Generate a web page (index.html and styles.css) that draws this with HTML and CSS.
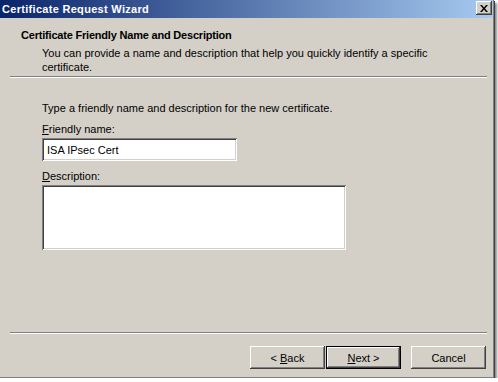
FILE: index.html
```html
<!DOCTYPE html>
<html lang="en">
<head>
  <meta charset="UTF-8" />
  <title>Certificate Request Wizard</title>
  <link rel="stylesheet" href="styles.css">
</head>
<body>

  <div class="window">

    <div class="titlebar">
      <span class="title">Certificate Request Wizard</span>
      <button class="close" aria-label="Close">
        <svg width="8" height="7" viewBox="0 0 8 7">
          <path d="M0 0h2l2 2.5L6 0h2L5 3.5 8 7H6L4 4.5 2 7H0l3-3.5z" fill="#000"/>
        </svg>
      </button>
    </div>

    <div class="header">
      <h1>Certificate Friendly Name and Description</h1>
      <p>You can provide a name and description that help you quickly identify a specific certificate.</p>
    </div>
    <div class="sep"></div>

    <div class="content">
      <p class="intro">Type a friendly name and description for the new certificate.</p>
      <label class="label" for="fname"><u>F</u>riendly name:</label>
      <input class="field" id="fname" type="text" value="ISA IPsec Cert">
      <label class="label desc-label" for="desc"><u>D</u>escription:</label>
      <textarea class="area" id="desc"></textarea>
    </div>

    <div class="footer">
      <div class="sep bottom"></div>
      <div class="buttons">
        <button class="btn">&lt; <u>B</u>ack</button>
        <button class="btn default"><u>N</u>ext &gt;</button>
        <button class="btn cancel">Cancel</button>
      </div>
    </div>

  </div>

</body>
</html>
```

FILE: styles.css
```css
    body {
      margin: 0;
      background: #ffffff;
      font-family: 'Liberation Sans', Arial, sans-serif;
      font-size: 11px;
      color: #000;
    }

    .window {
      width: 493px;
      height: 377px;
      background: #d4d0c8;
      display: flex;
      flex-direction: column;
      border-right: 1px solid #808080;
      border-bottom: 1px solid #808080;
      box-shadow: 1px 1px 0 #404040, 3px 3px 2px rgba(0,0,0,0.45);
    }

    .titlebar {
      height: 18px;
      display: flex;
      align-items: center;
      justify-content: space-between;
      padding: 0 1px 0 2px;
      background: linear-gradient(to right, #0a246a, #a6caf0);
    }

    .title {
      color: #fff;
      font-weight: bold;
      font-size: 11px;
      line-height: 18px;
      letter-spacing: 0.3px;
    }

    .close {
      width: 16px;
      height: 14px;
      padding: 0;
      margin-top: -2px;
      background: #d4d0c8;
      border: none;
      box-shadow: inset -1px -1px 0 #404040, inset 1px 1px 0 #fff, inset -2px -2px 0 #808080;
      display: flex;
      align-items: center;
      justify-content: center;
    }

    .header {
      padding: 10px 0 0 21px;
    }

    .header h1 {
      margin: 0 0 4px;
      font-size: 11px;
      font-weight: bold;
      line-height: 14px;
      letter-spacing: -0.2px;
    }

    .header p {
      margin: 0 0 0 21px;
      width: 420px;
      line-height: 14px;
    }

    .sep {
      margin: 2px 6px 0 10px;
      border-top: 1px solid #808080;
      border-bottom: 1px solid #fff;
    }

    .content {
      padding: 23px 0 0 42px;
      display: flex;
      flex-direction: column;
      align-items: flex-start;
    }

    .intro {
      margin: 0 0 7px;
      line-height: 14px;
    }

    .label {
      line-height: 14px;
      margin-bottom: 2px;
    }

    .desc-label {
      margin-top: 8px;
    }

    .field, .area {
      box-sizing: border-box;
      margin: 0;
      border: none;
      background: #fff;
      font-family: inherit;
      font-size: 11px;
      box-shadow: inset 1px 1px 0 #808080, inset -1px -1px 0 #fff, inset 2px 2px 0 #404040, inset -2px -2px 0 #d4d0c8;
      outline: none;
      resize: none;
    }

    .field {
      width: 195px;
      height: 23px;
      padding: 0 4px 0 5px;
    }

    .area {
      width: 304px;
      height: 65px;
    }

    .footer {
      margin-top: auto;
      padding-bottom: 8px;
    }

    .sep.bottom {
      margin-bottom: 12px;
    }

    .buttons {
      display: flex;
      justify-content: flex-end;
      padding-right: 7px;
    }

    .btn {
      width: 75px;
      height: 23px;
      padding: 0;
      border: none;
      background: #d4d0c8;
      font-family: inherit;
      font-size: 11px;
      color: #000;
      box-shadow: inset -1px -1px 0 #404040, inset 1px 1px 0 #fff, inset -2px -2px 0 #808080;
    }

    .btn.default {
      margin-left: 1px;
      box-shadow: inset 0 0 0 1px #000, inset -2px -2px 0 #404040, inset 2px 2px 0 #fff, inset -3px -3px 0 #808080;
    }

    .btn.cancel {
      margin-left: 10px;
    }
```
